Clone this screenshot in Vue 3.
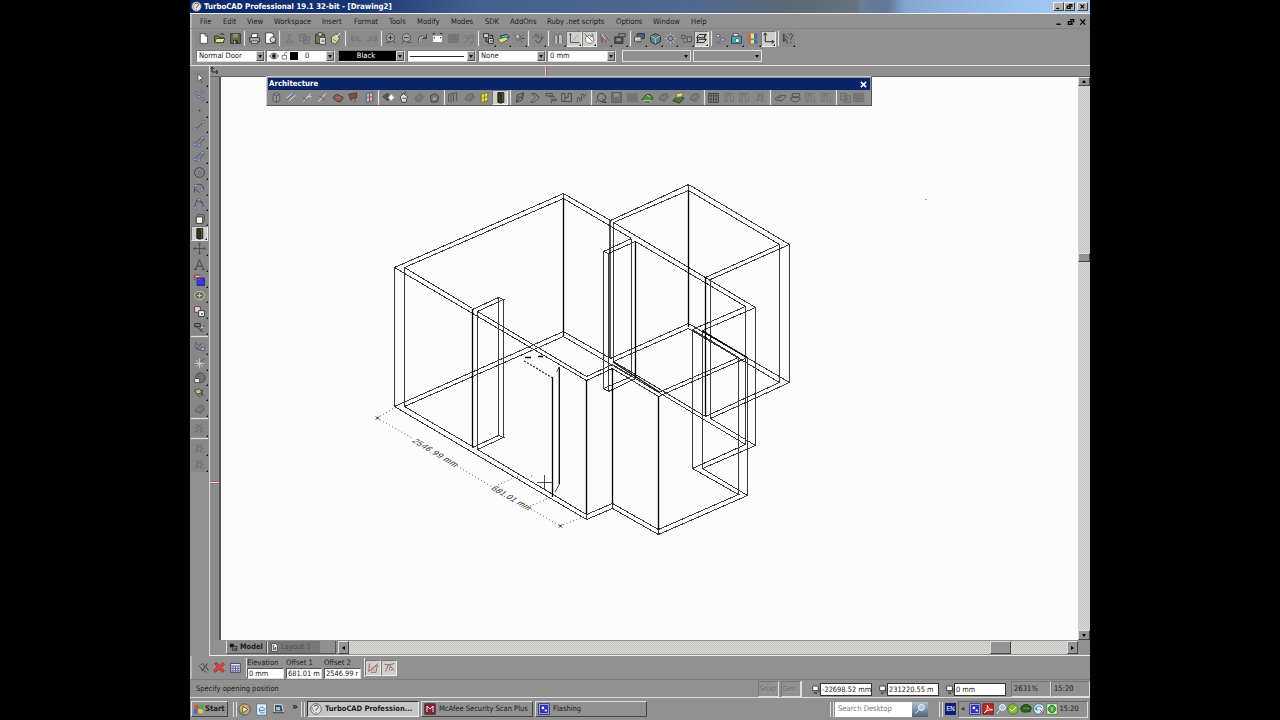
<script setup>
import { h } from 'vue'

const menus = [
  ['File', 23], ['Edit', 24], ['View', 27], ['Workspace', 48], ['Insert', 32],
  ['Format', 35], ['Tools', 28], ['Modify', 34], ['Modes', 34], ['SDK', 25],
  ['AddOns', 37], ['Ruby .net scripts', 69], ['Options', 37], ['Window', 38], ['Help', 30]
]

// each layer: [path, fill, stroke]
const icons = {
  new: [['M4 2h6l3 3v9h-9z', '#fff', '#555'], ['M10 2v3h3', 'none', '#555']],
  open: [['M2 5h5l1 2h5v6h-11z', '#8a8a30', '#333'], ['M4 8h11l-3 5h-10z', '#e6e38a', '#444'], ['M9 3l3-1 2 2', 'none', '#222']],
  save: [['M2 2h12v12h-12z', '#676b45', '#333'], ['M5 2h6v5h-6z', '#8c8f78', ''], ['M5 10h6v4h-6z', '#333', ''], ['M6 11h2v3h-2z', '#bbb', '']],
  print: [['M5 2h7l-1 5h-7z', '#fff', '#444'], ['M2 7h12v5h-12z', '#b5b5ac', '#333'], ['M4 11h8v3h-8z', '#ddd', '#444']],
  preview: [['M2 1h8l2 3v10h-10z', '#fff', '#444'], ['M11 6a3.5 3.5 0 1 1-.1 0M13 12l2 3', '#c8d8d8', '#333']],
  cut: [['M6 2l4 9M10 2l-4 9M5 11a1.5 1.5 0 1 1-.1 0M11 11a1.5 1.5 0 1 1-.1 0', 'none', '#737373']],
  copy: [['M2 3h7v8h-7zM7 6h7v8h-7z', '#8a8a8a', '#6b6b6b'], ['M4 6h3M9 9h3M9 11h3', 'none', '#666']],
  paste: [['M2 3h11v11h-11z', '#777755', '#333'], ['M5 1h5v4h-5z', '#ddd', '#333'], ['M7 7h7v8h-7z', '#fff', '#444'], ['M9 10h4M9 12h4', 'none', '#555']],
  brush: [['M3 6l6-4 4 6-5 7-5-2z', '#d5d29a', '#555'], ['M9 6l5-5', 'none', '#fff'], ['M5 9l4 3', 'none', '#777']],
  undo: [['M2 4v6h5M3 9c2-5 4-5 6 0M10 6v5h4', 'none', '#747474']],
  redo: [['M14 4v6h-5M13 9c-2-5-4-5-6 0M6 6v5h-4', 'none', '#747474']],
  zoomin: [['M8 2a5 5 0 1 1-.1 0M11 11l3 3', '#a8a8a8', '#505050'], ['M5 7h6M8 4v6', 'none', '#333'], ['M2 13h5', 'none', '#555']],
  zoomout: [['M8 2a5 5 0 1 1-.1 0M5 11l-3 3', '#a8a8a8', '#505050'], ['M5 7h6', 'none', '#333'], ['M9 13h5', 'none', '#555']],
  zoomprev: [['M3 13c-1-8 4-10 9-6M13 3v5h-5', 'none', '#444'], ['M4 12c0-5 2-6 5-6', 'none', '#ccc']],
  full: [['M2 4h12v9h-12z', '#fff', '#888'], ['M2 2h3M11 2h3M4 6v2M12 6v2', 'none', '#222']],
  block: [['M2 3h12v10h-12z', '#7c7c7c', '#747474'], ['M2 6h12M2 9h12M6 3v10M10 3v10', 'none', '#707070']],
  pan: [['M2 5h4v3h4v-4h4v9h-4M3 13l7-6', 'none', '#727272']],
  tree: [['M2 2h6v5h-6zM8 8h6v6h-6z', '#ccc', '#333'], ['M5 7v5h3M9 4h4v3M10 11h3', 'none', '#222']],
  layers: [['M4 5l8-2 3 3-8 3z', '#3fc6b4', '#236'], ['M1 9l10-3 3 3-9 5z', '#e2d977', '#564']],
  pick: [['M2 3l4 8 7-8M8 3l3 11', 'none', '#666'], ['M4 4h3v3h-3z', '#ccc', ''], ['M11 8h3', 'none', '#335']],
  spell: [['M2 7l3-5 2 5M3 5h3M8 2v5h4v-5', 'none', '#666'], ['M4 10l4 4 6-8', 'none', '#446']],
  bars: [['M3 14v-9l2-2 2 2v9M8 14v-11l3-1 2 4v8', '#bdbdbd', '#666']],
  axis: [['M3 2v11h11', 'none', '#6c4444'], ['M5 11l8-8', 'none', '#a9a59b'], ['M2 2h2v2h-2z', '#444', '']],
  orbit: [['M8 4a5 5 0 1 1-.1 0', '#fff', '#777'], ['M2 2l9 9M11 2l2 3-4 1', 'none', '#8a6666']],
  redcut: [['M3 2l2 11 2-9 3 10M10 6l4 5', 'none', '#8a525a'], ['M5 3l4 6', 'none', '#ddd']],
  camera: [['M1 6h10v8h-10z', '#555', '#333'], ['M6 2h8v4h-8z', '#888', '#444'], ['M3 8h5v3h-5z', '#999', '']],
  win: [['M5 2h9v6h-9z', '#57599b', '#333'], ['M2 6h8v6h-8z', '#d9d9d0', '#444'], ['M1 14l4-4h9', 'none', '#997']],
  cube: [['M2 5l6-3 6 3v7l-6 3-6-3z', '#5c858a', '#333'], ['M2 5l6 3 6-3M8 8v6', 'none', '#9bc0c6']],
  star: [['M8 1v14M1 8h14M3 3l10 10M13 3l-10 10', 'none', '#bcbcd0'], ['M8 5a3 3 0 1 1-.1 0', '#8d94ba', '#445']],
  chip: [['M2 4h4v4h-4zM9 6h5v6h-5z', '#999', '#555'], ['M6 6h3M4 8v5h5', 'none', '#667']],
  wire: [['M5 3h9l-3 4h-9zM5 9h9l-3 4h-9zM3 7v6M12 3v6', 'none', '#222']],
  nodes: [['M3 3h4v3h-4zM9 8h4v3h-4zM4 12h3v2h-3z', '#dfe0f4', '#667'], ['M6 5l6 4M10 9l-5 4', 'none', '#7a6ca0']],
  photo: [['M2 5h12v9h-12z', '#4ba9b3', '#345'], ['M4 2h6v3h-6z', '#fff', '#555'], ['M9 8a2.5 2.5 0 1 1-.1 0', '#fff', '#355']],
  palette: [['M2 2h4v12h-4z', '#d95e4f', ''], ['M6 2h4v12h-4z', '#eee267', ''], ['M10 2h4v12h-4z', '#4a65b2', ''], ['M2 8h12v2h-12z', '#3ba86c', '']],
  ucs: [['M4 2v10h10M2 4l2-3 2 3M12 10l3 2-3 2', 'none', '#222']],
  help: [['M3 2v10l3-3 2 5M3 2l6 6', '#555', '#444'], ['M10 4c0-3 5-2 4 1l-2 3v2M12 12v2', 'none', '#444']],
  cursor: [['M6 2v10l3-3 2 5M6 2l6 6-3 1', '#fff', '#555']],
  snapset: [['M2 3h3v3h-3zM10 2h3v3h-3zM6 8h3v3h-3zM11 11h3v3h-3z', '#a8acc8', '#626789']],
  point: [['M7 7h2v2h-2z', '#333', '']],
  line: [['M3 13l10-9', 'none', '#4c4c5a'], ['M1 11h3v3h-3zM11 2h3v3h-3z', '#b3bce1', '#656c96']],
  dbl: [['M2 11l9-9M5 14l9-9', 'none', '#50505c'], ['M1 10h3v3h-3zM10 2h3v3h-3zM6 11h3v3h-3z', '#b3bce1', '#656c96']],
  circle: [['M8 2a6 6 0 1 1-.1 0', 'none', '#444'], ['M7 7h3v3h-3z', '#b3bce1', '#535b87']],
  arc: [['M2 13c-2-14 12-12 11-4M8 13l-5-4', 'none', '#464650'], ['M9 8h3v3h-3zM2 3h3v3h-3z', '#b3bce1', '#656c96']],
  spline: [['M2 13c3-14 7-14 11 0M4 4l8 3', 'none', '#484855'], ['M1 12h3v3h-3zM12 12h3v3h-3zM6 2h3v3h-3z', '#b3bce1', '#656c96']],
  box: [['M4 6h8v8h-8z', '#fff', '#333'], ['M4 6l2-3h8v7l-2 4', 'none', '#555']],
  door: [['M5 2h7v12h-7z', '#5e6032', '#222'], ['M5 2l4 2v11l-4-1z', '#36391b', '#222']],
  move: [['M8 1v14M1 8h14M6 3l2-2 2 2M6 13l2 2 2-2M3 6l-2 2 2 2M13 6l2 2-2 2', 'none', '#505050']],
  text: [['M3 14l5-12 5 12M5 10h6M1 14h4M11 14h4', 'none', '#444']],
  blue: [['M5 5h9v9h-9z', '#3a3ade', '#2424a0'], ['M2 1h6v6h-6z', 'none', '#a44'], ['M4 3h4', 'none', '#ddd']],
  ring: [['M8 3c8 0 8 10 0 10s-8-10 0-10', '#6c6c68', '#d2d272'], ['M5 8h6M8 5v6', 'none', '#cbd']],
  dice: [['M2 2h7v7h-7z', '#e5d6d0', '#644'], ['M7 7h7v7h-7z', '#fff', '#333'], ['M10 10h2v2h-2z', '#333', '']],
  tools: [['M2 3h7v4h-7z', '#777', '#333'], ['M4 7l8 6M14 5l-5 8', 'none', '#444'], ['M10 7h3v2h-3z', '#bbd', '']],
  wand: [['M3 6l4-3 3 4-4 4zM6 11l6 3', '#8b8b82', '#555'], ['M13 3l-7 9M11 7l3 5', 'none', '#3a3a3a'], ['M4 5l3 3', 'none', '#c89a9a']],
  axes: [['M4 2v9l10 2M4 10l7-6', 'none', '#4e4e5e'], ['M10 9h4v4h-4zM3 6h3v3h-3z', '#b0b8d9', '#56608e']],
  burst: [['M8 2v12M2 8h12M4 4l8 8M12 4l-8 8', 'none', '#c6c6d2'], ['M9 6l5-4', 'none', '#444']],
  sphere: [['M9 1a6 6 0 1 1-.1 0', '#737373', '#4c4c4c'], ['M2 8h6v5h-6z', '#eee', '#555']],
  gold: [['M2 4l6-2 3 5-6 2z', '#c7c36e', '#444'], ['M5 9l4 4M9 7l5 4M12 3l-2 8', 'none', '#3d4b3c']],
  rock: [['M2 10l4-6 6-1 2 5-5 5z', '#757575', '#686868'], ['M5 9l5-3', 'none', '#888']],
  scrap: [['M3 3l4 2 5-3M3 8l5-2 5 3M2 12l6-2 5 3M6 3l-2 10M11 4l-2 10', 'none', '#707070']],
  wall: [['M4 4l4-2 4 2v8l-4 2-4-2zM8 6v8M4 4l4 2 4-2', '#9999a6', '#555565']],
  rails: [['M2 9l7-6M5 12l8-7M7 14l6-6', 'none', '#dedeef'], ['M2 11l9-8M6 14l7-6', 'none', '#686884']],
  slash: [['M3 13l9-10M8 7h5', 'none', '#ddd'], ['M2 8l5 3', 'none', '#555']],
  slashred: [['M3 13l9-10', 'none', '#ddd'], ['M4 6l7 5', 'none', '#8d4b4b']],
  redroof: [['M1 8l5-4 8 4-3 5h-5z', '#84645f', '#553a37'], ['M5 8h5', 'none', '#b07070']],
  redflag: [['M2 4l10-2v6l-8 2z', '#84504f', '#503c3c'], ['M10 9v5M5 10v3', 'none', '#555']],
  colwin: [['M4 3l8-1v10l-8 2z', '#bbb6d4', '#5b5f8f'], ['M8 3v10M4 8l8-1', 'none', '#a4484c']],
  slab: [['M1 7l5-4 5 3-4 6z', '#57594f', '#444'], ['M11 4l4 4-4 4-3-4z', '#fff', '#bbb']],
  ball: [['M4 7l4-4 5 4-2 7h-5z', '#dcdcd2', '#444'], ['M7 9h4M6 4l5-2', 'none', '#444']],
  gray: [['M3 8l5-5 5 4-4 6-5-1z', '#7b7b7b', '#696969']],
  geo: [['M3 6l5-3 5 3-1 7-8 1z', '#7d776b', '#4a4643'], ['M6 8h4v3h-4z', '#b2a6a2', '']],
  fence: [['M2 4l10-2v10M2 4v10M5 5v9M8 4v9', '#878787', '#555']],
  yellow: [['M4 4l8-2v10l-8 2z', '#eaea44', '#74742b'], ['M8 3v10M4 9l8-2', 'none', '#84842a']],
  chain: [['M4 5l8-3-2 9-7 3zM3 13l9-10M5 7l6 2', 'none', '#454545']],
  chevs: [['M3 3h5l5 5-7 6h-4l6-6zM6 3l6 5', 'none', '#555']],
  flow: [['M1 3h8v3h-8zM5 7h7M7 10h7v2h-6v3', 'none', '#505050']],
  plan: [['M2 3v10h12v-10h-4v5h-4v-5zM6 8v5', 'none', '#4a4a4a']],
  steps: [['M3 14v-6h3v5M8 12v-8h3v5M11 5h3', 'none', '#555']],
  lens: [['M8 3a5 5 0 1 1-.1 0M3 12l-2 2M9 10l5 4h-5', 'none', '#3d3d3d']],
  disk: [['M2 2h12v12h-12z', '#737373', '#606060'], ['M5 3h6v4h-6z', '#929292', '']],
  hill: [['M1 11l5-6 5-1 4 5-6 5z', '#4c9048', '#353f2e'], ['M2 12h11', 'none', '#dbd899'], ['M7 5l4 2', 'none', '#b7e28b']],
  hilly: [['M1 12l5-5h5l4 2-6 6z', '#55703f', '#353f2e'], ['M6 3l8-1-2 5-7 1z', '#dfdb84', '#675']],
  grid: [['M2 3h12v11h-12zM2 6h12M2 10h12M5 3v11M8 3v11M11 3v11', '#8c8c8c', '#444']],
  stat: [['M2 3v10h3v-8h4v8h4v-6M2 3h11', 'none', '#737373']],
  flat: [['M2 9l6-4 7 1-5 6-8-1zM5 9l5-3', 'none', '#525252']],
  flats: [['M4 3h9v4h-9zM2 8h10l2 2-5 4-6-2z', 'none', '#525252']],
  redx: [['M2 3l3-1 3 4 4-4 2 2-4 4 4 4-2 2-5-4-4 4-2-2 4-5z', '#de4649', '#aa2e31']],
  table: [['M2 3h12v11h-12z', '#f0f0fb', '#424277'], ['M2 6h12M2 9h12M2 12h12M5 6v8M8 6v8M11 6v8', 'none', '#62639a']],
  compass: [['M3 3l-1 10 10-8M5 12l8-9M13 5l-2 9h-6', 'none', '#a7656a'], ['M4 6l7 7', 'none', '#aaa']],
  compass2: [['M3 13l4-9 7 8M2 4l5 1 7-2', 'none', '#a7656a'], ['M8 8h3v3h-3z', '#fff', '#977']],
  logo: [['M8 1a7 7 0 1 1-.1 0', '#e7e7df', '#555'], ['M5 5c2-3 7-2 6 1l-3 3v1M8 12v1', 'none', '#333'], ['M2 4l3 8', 'none', '#888']],
  eye: [['M1 8c4-6 10-6 14 0-4 6-10 6-14 0', '#fff', '#111'], ['M8 5a3 3 0 1 1-.1 0', '#223', '#111']],
  lock: [['M5 7h7v6h-7zM9 7v-3c0-3 4-3 4 0', 'none', '#555']],
  models: [['M2 2h6v5h-6z', '#111', '#111'], ['M6 6h8v7h-8z', '#888', '#111'], ['M8 9l3 2 3-2', 'none', '#111']],
  sheet: [['M3 1h7l3 3v11h-10z', '#fff', '#222'], ['M8 4h-2v8h4v-5M7 9h3', 'none', '#111']],
  coord: [['M3 1h10v8h-10z', '#fff', '#111'], ['M5 11l6 4M11 11l-6 4M14 5v8', 'none', '#222']],
  media: [['M8 1a7 7 0 1 1-.1 0', '#dca65a', '#335b91'], ['M6 4l6 4-6 4z', '#fff', '#363'], ['M2 8a6 6 0 0 0 6 6', 'none', '#2a8a4a']],
  ie: [['M2 1h12v14h-12z', '#e9eff4', '#4f7ca0'], ['M12 11c-6 5-9-5-4-6 4 0 4 3 3 4h-6', 'none', '#2877a8']],
  desk: [['M3 2h9l2 9h-11z', '#33495f', '#ddd'], ['M5 5h5v4h-5z', '#9fc4d9', ''], ['M1 12h14', 'none', '#333']],
  mcafee: [['M1 1h14v14h-14z', '#8b2233', '#333'], ['M4 12v-8l4 4 4-4v8', 'none', '#fff']],
  flash: [['M1 1h14v14h-14z', '#fff', '#11118c'], ['M3 3h10v10h-10z', '#3a3abc', '#11118c'], ['M5 5h3v3h-3zM9 9h3v2h-3z', '#fff', '']],
  pdf: [['M1 1h14v14h-14z', '#b62a23', '#7b1d18'], ['M3 13c3-2 5-6 4-10 2 5 4 6 7 6-5 0-8 1-11 4', 'none', '#fff']],
  search: [['M10 2a4 4 0 1 1-.1 0', '#a9c8e0', '#fff'], ['M7 9l-5 5', 'none', '#e5eef6']],
  check: [['M8 1a7 7 0 1 1-.1 0', '#88b23a', '#4a7420'], ['M4 8l3 3 5-6', 'none', '#fff']],
  dino: [['M1 8c0-8 14-8 14 0l-2 4h-10z', '#2c6325', '#183c16'], ['M4 12v2M11 12v2M5 7h7', 'none', '#72a85d']],
  sync: [['M8 1a7 7 0 1 1-.1 0', '#dcebf5', '#27779b'], ['M4 9c0-6 6-6 8-2M4 6v3h3', 'none', '#27779b'], ['M9 9l5 5M14 9l-5 5', 'none', '#c23535']],
  webroot: [['M1 1h14v14h-14z', '#e7f1dc', '#4d7a3d'], ['M8 3a5 5 0 1 1-.1 0', '#4ca83d', '#26762a'], ['M8 6v4', 'none', '#fff']],
  flag: [['M2 3l5-1v6l-5 1z', '#d94e32', ''], ['M8 2l6 1v5l-6-1z', '#54a643', ''], ['M1 9l5-1v6l-5 1z', '#416bd0', ''], ['M7 8l6 1v5l-6-1z', '#ecc73f', '']]
}

const Icon = (props) =>
  h('svg', { viewBox: '0 0 16 16', class: 'icon' },
    (icons[props.name] || []).map(([d, fill, stroke]) =>
      h('path', { d, fill, stroke: stroke || 'none', 'stroke-width': 1.2 })))
Icon.props = ['name']

// [icon, cell width, pressed]; '|' is a separator
const mainBar = [
  ['new', 16], ['open', 16], ['save', 16], ['|', 3], ['print', 16], ['preview', 16], ['|', 3],
  ['cut', 16], ['copy', 15], ['paste', 16], ['brush', 15], ['|', 5], ['undo', 16], ['redo', 15], ['|', 4],
  ['zoomin', 15], ['zoomout', 16], ['zoomprev', 16], ['full', 15], ['block', 16], ['pan', 15], ['|', 4],
  ['tree', 16], ['layers', 15], ['pick', 16], ['|', 3], ['spell', 16], ['|', 4],
  ['bars', 16], ['axis', 16, 1], ['orbit', 15, 1], ['redcut', 15], ['camera', 16], ['|', 4],
  ['win', 15], ['cube', 16], ['star', 15], ['chip', 16], ['wire', 15, 1], ['|', 4],
  ['nodes', 15], ['photo', 16], ['palette', 17], ['ucs', 15, 1], ['|', 4], ['help', 15]
]

const archBar = [
  ['wall', 16], ['rails', 15], ['slash', 16], ['slashred', 15], ['redroof', 16], ['redflag', 15], ['colwin', 16], ['|', 3],
  ['slab', 16], ['ball', 15], ['gray', 16], ['geo', 15], ['|', 4],
  ['fence', 15], ['rock', 16], ['yellow', 15], ['door', 16, 1], ['|', 4],
  ['chain', 16], ['chevs', 15], ['flow', 16], ['plan', 15], ['steps', 15], ['|', 4],
  ['lens', 16], ['disk', 15], ['block', 16], ['hill', 15], ['rock', 16], ['hilly', 15], ['rock', 16], ['|', 4],
  ['grid', 15], ['stat', 16], ['stat', 15], ['scrap', 16], ['|', 4],
  ['flat', 16], ['flats', 15], ['stat', 15], ['stat', 16], ['|', 4], ['copy', 14], ['block', 13]
]

const sideBar = [
  ['cursor', 17], ['snapset', 16], ['point', 15], ['line', 15], ['dbl', 16], ['dbl', 15], ['circle', 16],
  ['arc', 16], ['spline', 15], ['box', 15], ['door', 15, 1], ['move', 15], ['text', 16], ['blue', 16],
  ['ring', 15], ['dice', 16], ['tools', 16], ['|', 3], ['axes', 17], ['burst', 16], ['sphere', 15],
  ['gold', 15], ['rock', 16], ['|', 3], ['scrap', 17], ['|', 3], ['scrap', 16], ['scrap', 16]
]

const thinLines = [
  // main room, ceiling
  'M394.5 267.5L563.5 193.5L610.5 220.5', 'M404.5 267.5L563.5 198.5L631.5 238.5',
  'M394.5 267.5L586.5 380.5L612.5 368.5L658.5 396.5L747.5 357.5L702.5 330.5L755.5 307.5L613.5 222.5',
  'M404.5 267.5L472.5 308.5M477.5 311.5L586.5 376.5L612.5 364.5L658.5 392.5L738.5 357.5L692.5 329.5L745.5 306.5L635.5 241.5',
  'M472.5 309.5L498.5 297.5L503.5 299.5L477.5 311.5',
  'M603.5 251.5L631.5 238.5M603.5 251.5L608.5 253.5L635.5 241.5',
  // back room, ceiling
  'M610.5 220.5L688.5 184.5L789.5 244.5L710.5 279.5', 'M613.5 222.5L688.5 190.5L779.5 244.5L705.5 277.5',
  // floor
  'M394.5 406.5L563.5 331.5L610.5 358.5L688.5 323.5L789.5 382.5L710.5 418.5L755.5 445.5L702.5 468.5L747.5 495.5L658.5 534.5L612.5 508.5L586.5 519.5Z',
  'M472.5 446.5L404.5 406.5L563.5 336.5L631.5 376.5L603.5 388.5L608.5 391.5L635.5 378.5L745.5 444.5L692.5 468.5L738.5 494.5L658.5 529.5L612.5 503.5L586.5 514.5L477.5 449.5L503.5 437.5L498.5 435.5L472.5 447.5',
  'M613.5 361.5L688.5 328.5L779.5 382.5L705.5 416.5Z',
  // corners
  'M394.5 267V406M404.5 268V406M477.5 311V449M498.5 297V435M503.5 299V437M603.5 251V388M608.5 253V391',
  'M613.5 222V361M631.5 239V376M692.5 330V468M702.5 332V468M738.5 357V494M747.5 358V495M745.5 306V444',
  'M755.5 307V445M710.5 279V418M779.5 244V382M789.5 244V382M563.5 193V198M688.5 184V190M658.5 529V534M612.5 503V508M586.5 514V519'
]

const boldLines = [
  'M563.5 198V336M472.5 309V447M610 220V358M635.5 241V378M688.5 190V327M705.5 277V416',
  'M586.5 380V514M612.5 368V503M658.5 396V529M552.5 377V497', 'M559.3 367V484'
]

const fields = [['Elevation', '0 mm', 37], ['Offset 1', '681.01 m', 36], ['Offset 2', '2546.99 r', 37]]
const coords = [['-22698.52 mm', 67], ['231220.55 m', 67], ['0 mm', 62]]
const tray = ['flash', 'pdf', 'search', 'check', 'dino', 'sync', 'webroot']
</script>

<template>
  <div class="screen">
    <div class="app">
      <header class="titlebar">
        <Icon name="logo" />
        <b>TurboCAD Professional 19.1 32-bit - [Drawing2]</b>
        <div class="win-buttons">
          <i><svg viewBox="0 0 10 9"><path d="M2 7h4" /></svg></i>
          <i><svg viewBox="0 0 10 9"><path d="M4 2h4v3M2 4h4v3h-4z" /></svg></i>
          <i class="close"><svg viewBox="0 0 10 9"><path d="M2.500 2l4.500 5M7 2l-4.500 5" /></svg></i>
        </div>
      </header>

      <nav class="menubar">
        <span v-for="[label, w] in menus" :key="label" :style="{ width: w + 'px' }">{{ label }}</span>
        <div class="win-buttons flat">
          <i><svg viewBox="0 0 10 9"><path d="M2 7h5" /></svg></i>
          <i><svg viewBox="0 0 10 9"><path d="M4 2h4v3M2 4h4v3h-4z" /></svg></i>
          <i class="close"><svg viewBox="0 0 10 9"><path d="M2 1.500l5.500 6M7.500 1.500l-5.500 6" /></svg></i>
        </div>
      </nav>

      <div class="toolbar main-bar">
        <span
          v-for="([name, w, on], i) in mainBar"
          :key="i"
          :class="[name === '|' ? 'sep' : 'tool', { on, menu: name !== '|' && (i > 27 || (i > 21 && i < 27)) }]"
          :style="{ width: w + 'px' }"
        ><Icon v-if="name !== '|'" :name="name" /></span>
      </div>

      <div class="props">
        <div class="combo style"><span>Normal Door</span><em></em></div>
        <div class="combo layer"><Icon name="eye" /><Icon name="lock" /><u></u><span>0</span><em></em></div>
        <div class="combo color"><span>Black</span><em></em></div>
        <div class="combo pattern"><hr /><em></em></div>
        <div class="combo brush"><span>None</span><em></em></div>
        <div class="combo width"><span>0 mm</span><em></em></div>
        <div class="combo off first"><em></em></div>
        <div class="combo off"><em></em></div>
      </div>

      <div class="work">
        <aside class="side">
          <span
            v-for="([name, s, on], i) in sideBar"
            :key="i"
            :class="[name === '|' ? 'hsep' : 'tool', { on, menu: name !== '|' }]"
            :style="{ height: s + 'px' }"
          ><Icon v-if="name !== '|'" :name="name" /></span>
        </aside>

        <div class="document">
          <div class="ruler-top">
            <svg viewBox="0 0 10 9" class="origin"><path d="M2 1v5h6M1 3l1-2 2 2M6 4l2 2-2 2" /></svg>
            <i></i>
          </div>
          <div class="doc-row">
            <div class="ruler-left"><i></i></div>
            <div class="canvas">
              <svg viewBox="221 77 857 563" width="857" height="563">
                <g class="thin"><path v-for="d in thinLines" :key="d" :d="d" /></g>
                <g class="bold"><path v-for="d in boldLines" :key="d" :d="d" /></g>
                <path class="heavy" d="M613 362L660 392.500M702 331L747 357.500" />
                <path class="mark" d="M525 357.500h6M538 356.500h5" />
                <path class="dash" d="M524 361L552 377.500" />
                <path class="cross" d="M559.500 367l-3 5M559.500 484L555 492M537 482.500h15M544.500 475v14M517 477h1M531 476h1" />
                <g class="dots">
                  <path d="M377 418L412 438M457 466L492 487M531 509L560 526" />
                  <path d="M377 418L394 408M560 526L586 516M498 485L518 476M530 506L552 497" />
                </g>
                <path class="cross" d="M375.500 416.500l4 3M379.500 416.500l-4 3M558.500 524.500l4 3M562.500 524.500l-4 3M925.500 199.500h1" />
                <text class="dim" transform="translate(411.500 441.500) rotate(31) skewX(-28)" textLength="50">2546.99 mm</text>
                <text class="dim" transform="translate(490.500 489) rotate(30) skewX(-28)" textLength="43">681.01 mm</text>
              </svg>
            </div>
            <div class="vscroll"><i class="up"></i><i class="thumb"></i><i class="down"></i></div>
          </div>
          <div class="tabs">
            <div class="tab"><Icon name="models" /><b>Model</b></div>
            <div class="tab layout"><Icon name="sheet" /><span>Layout 1</span></div>
            <div class="hscroll"><i class="left"></i><i class="thumb"></i><i class="right"></i></div>
          </div>
        </div>
      </div>

      <div class="inspector">
        <Icon name="wand" /><Icon name="redx" /><Icon name="table" />
        <span class="sep"></span>
        <label v-for="[label, value, w] in fields" :key="label" :style="{ width: w + 'px' }">
          {{ label }}<span>{{ value }}</span>
        </label>
        <span class="sep"></span>
        <span class="tool on"><Icon name="compass" /></span>
        <span class="tool on"><Icon name="compass2" /></span>
      </div>

      <div class="status">
        <p>Specify opening position</p>
        <div class="cell ghost">Snap</div>
        <div class="cell ghost geo">Geo</div>
        <div class="coords">
          <div v-for="[value, w] in coords" :key="value" class="coord" :style="{ width: w + 'px' }">
            <Icon name="coord" /><span>{{ value }}</span>
          </div>
        </div>
        <div class="cell zoom">2631%</div>
        <div class="cell clock">15:20</div>
      </div>

      <footer class="taskbar">
        <div class="start"><Icon name="flag" /><b>Start</b></div>
        <span class="grip"></span>
        <div class="quick"><Icon name="media" /><Icon name="ie" /><Icon name="desk" /><b>»</b></div>
        <span class="grip second"></span>
        <div class="task active"><Icon name="logo" /><b>TurboCAD Profession...</b></div>
        <div class="task"><Icon name="mcafee" />McAfee Security Scan Plus</div>
        <div class="task"><Icon name="flash" />Flashing</div>
        <span class="grip push"></span>
        <div class="search">Search Desktop</div>
        <div class="go"><Icon name="search" /></div>
        <span class="grip tray-grip"></span>
        <div class="lang">EN</div>
        <div class="tray"><b>«</b><Icon v-for="name in tray" :key="name" :name="name" /><span>15:20</span></div>
      </footer>

      <section class="palette">
        <h2>Architecture<svg viewBox="0 0 8 8"><path d="M1 1l6 6M7 1l-6 6" /></svg></h2>
        <div class="toolbar">
          <span
            v-for="([name, w, on], i) in archBar"
            :key="i"
            :class="[name === '|' ? 'sep' : 'tool', { on }]"
            :style="{ width: w + 'px' }"
          ><Icon v-if="name !== '|'" :name="name" /></span>
        </div>
      </section>
    </div>
  </div>
</template>

<style>
body {
  margin: 0;
  background: #000;
}
</style>

<style scoped>
* {
  box-sizing: border-box;
}

.screen {
  display: flex;
  justify-content: center;
  width: 1280px;
  height: 720px;
  overflow: hidden;
  background: #000;
  font: 7.6px/10px "DejaVu Sans Condensed", "DejaVu Sans", sans-serif;
  color: #1c1c1c;
}

.app {
  position: relative;
  display: flex;
  flex-direction: column;
  width: 900px;
  height: 720px;
  background: #919191;
  white-space: nowrap;
}

i {
  display: block;
}

.icon {
  display: block;
  flex: none;
  width: 12px;
  height: 12px;
}

.titlebar {
  display: flex;
  align-items: center;
  height: 13px;
  padding: 0 2px 0 1px;
  background: linear-gradient(90deg, #0a246a 0, #163474 18%, #46618f 32%, #4e688f 55%, #5a6877 66%, #66737f 74.200%, #6c7d96 74.500%, #607796 77.500%, #86a6d2 79.500%, #9bc3f0 92%, #a6caf0);
  color: #fff;
}

.titlebar .icon {
  width: 11px;
  height: 11px;
}

.titlebar b {
  margin-left: 2px;
  font-size: 7.800px;
}

.win-buttons {
  display: flex;
  margin-left: auto;
}

.win-buttons i {
  width: 11px;
  height: 9px;
  background: #b0b0aa;
  border: 1px solid #444;
  border-top-color: #eee;
  border-left-color: #eee;
}

.win-buttons .close {
  margin-left: 2px;
}

.win-buttons svg {
  display: block;
  width: 9px;
  height: 7px;
  fill: none;
  stroke: #000;
  stroke-width: 1.500;
}

.win-buttons.flat i {
  width: 12px;
  background: none;
  border-color: transparent;
}

.win-buttons.flat .close {
  margin-left: 0;
}

.win-buttons.flat svg {
  width: 10px;
  height: 8px;
}

.menubar {
  display: flex;
  align-items: center;
  height: 16px;
  padding: 1px 1px 0 10px;
  border-top: 1px solid #eee;
  border-bottom: 1px solid #838383;
  box-shadow: inset 3px 0 0 -1px #b5b5b5;
}

.menubar span {
  flex: none;
}

.toolbar {
  display: flex;
  align-items: center;
}

.main-bar {
  height: 19px;
  padding-left: 5px;
  box-shadow: inset 3px 0 0 -1px #b5b5b5;
}

.sep {
  align-self: stretch;
  flex: none;
  margin: 2px 0;
  background: linear-gradient(#e4e4e4, #e4e4e4) center / 1px 100% no-repeat;
}

.tool {
  position: relative;
  display: flex;
  flex: none;
  align-items: center;
  justify-content: center;
  height: 16px;
}

.tool .icon {
  width: 13px;
  height: 13px;
}

.main-bar .tool,
.palette .tool {
  background: #8a8a8a;
}

.main-bar .tool.on,
.palette .tool.on,
.side .tool.on,
.tool.on {
  background: #cfcfcb;
  border: 1px solid #eee;
  border-top-color: #777;
  border-left-color: #777;
}

.tool.menu::after {
  content: "";
  position: absolute;
  right: 0;
  bottom: 0;
  border: 1.500px solid #111;
  border-top-color: transparent;
  border-left-color: transparent;
}

.props {
  display: flex;
  align-items: center;
  height: 18px;
  padding: 0 0 1px 6px;
  border-bottom: 1px solid #e5e5e5;
  box-shadow: inset 3px 0 0 -1px #b5b5b5;
}

.combo {
  display: flex;
  flex: none;
  align-items: center;
  height: 12px;
  padding-left: 2px;
  background: #fff;
  border: 1px solid #777;
  border-right-color: #ddd;
  border-bottom-color: #ddd;
  font-size: 7.500px;
}

.combo em {
  display: flex;
  flex: none;
  align-items: center;
  justify-content: center;
  width: 8px;
  height: 10px;
  margin-left: auto;
  background: #999;
  border: 1px solid #555;
  border-top-color: #ddd;
  border-left-color: #ddd;
}

.combo em::after {
  content: "";
  border: 2px solid transparent;
  border-top: 3px solid #111;
  border-bottom: 0;
}

.combo.style { width: 69px; }
.combo.layer { width: 69px; margin-left: 1px; }
.combo.color { width: 67px; margin-left: 3px; background: #000; color: #fff; }
.combo.pattern { width: 69px; margin-left: 2px; }
.combo.brush { width: 68px; margin-left: 2px; }
.combo.width { width: 69px; margin-left: 1px; }
.combo.off { width: 69px; margin-left: 2px; background: none; border: 1px solid #e0e0e0; }
.combo.off.first { margin-left: 6px; }
.combo.off em { background: none; border-color: transparent; }

.layer .icon {
  width: 10px;
  height: 10px;
}

.layer u {
  width: 8px;
  height: 8px;
  margin: 0 7px 0 1px;
  background: #000;
}

.color span {
  flex: 1;
  padding-right: 5px;
  text-align: center;
}

.pattern hr {
  width: 54px;
  margin: 0;
  border: 0;
  border-top: 1px solid #222;
}

.work {
  display: flex;
  height: 590px;
}

.side {
  display: flex;
  flex: none;
  flex-direction: column;
  align-items: center;
  width: 19px;
  padding-top: 4px;
}

.side .tool {
  width: 17px;
  background: #878787;
}

.side .tool,
.hsep {
  margin-right: 1px;
}

.hsep {
  width: 17px;
  background: linear-gradient(#e0e0d8, #e0e0d8) center / 100% 1px no-repeat;
}

.document {
  display: flex;
  flex: 1;
  flex-direction: column;
  border-left: 1px solid #ddd;
}

.ruler-top {
  display: flex;
  height: 11px;
  background: #909090;
  border-bottom: 1px solid #5f5f5f;
}

.ruler-top i {
  width: 2px;
  height: 10px;
  margin-left: 325px;
  background: #a65f80;
  border-left: 1px solid #ccc;
}

.origin {
  width: 10px;
  height: 9px;
  fill: none;
  stroke: #222;
}

.doc-row {
  display: flex;
  height: 563px;
}

.ruler-left {
  width: 11px;
  padding-top: 404px;
  background: #8d8d8d;
  border-right: 2px solid #555;
}

.ruler-left i {
  height: 3px;
  border: 1px solid #a65f80;
  border-width: 1px 0;
  background: #ddd;
}

.canvas {
  width: 857px;
  background: #fdfcfd;
}

.canvas svg {
  display: block;
}

.canvas path {
  fill: none;
  stroke: #222;
}

.thin path {
  stroke: #3c3c3c;
  shape-rendering: crispEdges;
}

.bold path {
  stroke: #000;
  stroke-width: 1.300;
}

.canvas .heavy {
  stroke: #000;
  stroke-width: 1.100;
}

.canvas .mark {
  stroke: #000;
  stroke-width: 1.500;
}

.canvas .dash {
  stroke-width: 1.200;
  stroke-dasharray: 2 1.500;
}

.canvas .cross {
  stroke-width: .8;
}

.dots path {
  stroke: #555;
  stroke-width: .9;
  stroke-dasharray: 1 2.500;
}

.dim {
  font: 8px "Liberation Sans", sans-serif;
  fill: #222;
}

.vscroll,
.hscroll {
  display: flex;
  background: repeating-conic-gradient(#c3c3bf 0 25%, #d9d9d5 0 50%) 0 0 / 2px 2px;
}

.vscroll {
  flex-direction: column;
  flex: 1;
}

.vscroll i,
.hscroll i {
  display: flex;
  align-items: center;
  justify-content: center;
  height: 10px;
  background: #949494;
  border: 1px solid #444;
  border-top-color: #ddd;
  border-left-color: #ddd;
}

.up::after,
.down::after,
.left::after,
.right::after {
  content: "";
  border: 2.500px solid transparent;
}

.up::after { border-bottom: 3px solid #000; border-top: 0; }
.down::after { border-top: 3px solid #000; border-bottom: 0; }
.left::after { border-right: 3px solid #000; border-left: 0; }
.right::after { border-left: 3px solid #000; border-right: 0; }

.vscroll .up { height: 9px; }
.vscroll .thumb { margin: 167px 0 368px; height: 9px; }

.tabs {
  display: flex;
  height: 16px;
  padding: 1px 12px 1px 16px;
  border-bottom: 1px solid #eee;
}

.tab {
  display: flex;
  flex: none;
  align-items: center;
  width: 41px;
  height: 13px;
  padding-left: 2px;
  background: #888;
  border: 1px solid #555;
  border-top: 0;
  border-left-color: #ddd;
}

.tab b {
  font-size: 7.400px;
}

.tab .icon {
  width: 9px;
  height: 9px;
  margin-right: 2px;
}

.tab.layout {
  width: 69px;
  margin-right: 2px;
  background: linear-gradient(90deg, #777 52px, #909090 0);
  color: #505050;
}

.hscroll {
  flex: 1;
  height: 13px;
}

.hscroll i { width: 11px; height: 13px; }
.hscroll .thumb { width: 21px; margin-left: auto; }
.hscroll .right { margin-left: 56px; }

.inspector {
  display: flex;
  align-items: center;
  height: 24px;
  padding-left: 7px;
  border-bottom: 1px solid #7d7d7d;
  box-shadow: inset 3px 0 0 -1px #b5b5b5;
}

.inspector > .icon {
  width: 13px;
  height: 13px;
  margin-right: 3px;
}

.inspector .sep {
  width: 2px;
}

.inspector label {
  height: 22px;
  margin-right: 2px;
  font-size: 7.500px;
  line-height: 11px;
}

.inspector label span {
  display: block;
  height: 11px;
  padding-left: 1px;
  background: #fff;
  border: 1px solid #555;
  border-right-color: #ddd;
  border-bottom-color: #ddd;
  font-size: 7.400px;
  line-height: 9px;
}

.inspector .tool {
  width: 16px;
}

.status {
  display: flex;
  align-items: center;
  height: 17px;
  padding-left: 6px;
}

.status p {
  flex: none;
  width: 562px;
  margin: 0;
  font-size: 7.500px;
}

.cell {
  height: 16px;
  padding: 2px 2px 0;
  border: 1px solid #777;
  border-right-color: #ddd;
  border-bottom-color: #ddd;
}

.ghost {
  width: 21px;
  padding-left: 1px;
  color: #6c6c6c;
  font-size: 7.200px;
  text-shadow: 1px 1px #a2a2a2;
}

.ghost.geo { margin-left: 2px; width: 20px; }
.zoom { width: 40px; }
.clock { width: 39px; }

.coords {
  display: flex;
  width: 210px;
  height: 16px;
  align-items: center;
  padding: 2px 0 0 9px;
  border-left: 1px solid #ddd;
}

.coord {
  display: flex;
  flex: none;
  align-items: center;
}

.coord .icon {
  width: 9px;
}

.coord span {
  flex: none;
  width: 52px;
  height: 13px;
  padding-left: 1px;
  background: #fff;
  border: 1px solid #333;
  font-size: 7.400px;
  line-height: 11px;
}

.taskbar {
  display: flex;
  align-items: center;
  height: 23px;
  padding: 2px 2px 2px 1px;
  border-top: 1px solid #ddd;
}

.start,
.task {
  display: flex;
  align-items: center;
  height: 16px;
  border: 1px solid #444;
  border-top-color: #e0e0e0;
  border-left-color: #e0e0e0;
}

.start {
  flex: none;
  width: 37px;
  padding-left: 1px;
}

.start b {
  font-size: 7.700px;
}

.grip {
  flex: none;
  width: 4px;
  height: 15px;
  margin-left: 5px;
  border: 1px solid #ddd;
  border-width: 0 1px;
}

.quick {
  display: flex;
  flex: none;
  align-items: center;
  gap: 4px;
  width: 61px;
  padding-left: 1px;
}

.quick .icon {
  width: 13px;
  height: 13px;
}

.quick b {
  margin: -5px 0 0 3px;
  font-size: 10px;
}

.grip.second {
  margin-left: 3px;
}

.task {
  flex: none;
  gap: 3px;
  width: 112px;
  margin-left: 2px;
  padding-left: 2px;
  font-size: 7.500px;
}

.task + .task {
  margin-left: 2px;
}

.task.active {
  background: #c6c6c4;
  border-color: #333 #eee #eee #333;
}

.grip.push {
  margin-left: 183px;
}

.search {
  flex: none;
  width: 77px;
  height: 15px;
  margin-left: 1px;
  padding: 2px 3px;
  background: #fff;
  color: #777;
  font-size: 7.600px;
}

.go {
  display: flex;
  flex: none;
  justify-content: center;
  align-items: center;
  width: 16px;
  height: 15px;
  background: linear-gradient(#aebfce, #50637a);
}

.tray-grip {
  margin-left: 11px;
}

.lang {
  flex: none;
  width: 11px;
  height: 12px;
  margin-left: 2px;
  background: #0c1e78;
  color: #fff;
  font-size: 7px;
  line-height: 12px;
  text-align: center;
}

.tray {
  display: flex;
  align-items: center;
  height: 17px;
  margin-left: 2px;
  padding-left: 2px;
  border: 1px solid #666;
  border-right-color: #ddd;
  border-bottom-color: #ddd;
  flex: 1;
}

.tray b {
  width: 8px;
}

.tray .icon {
  margin-right: .8px;
}

.tray span {
  margin-left: 1px;
  font-size: 7.400px;
}

.palette {
  position: absolute;
  top: 76px;
  left: 76px;
  width: 606px;
  height: 30px;
  padding: 1px;
  background: #919191;
  border: 1px solid #ccc;
  border-right-color: #555;
  border-bottom-color: #555;
}

.palette h2 {
  display: flex;
  align-items: center;
  justify-content: space-between;
  height: 12px;
  margin: 0;
  padding: 0 3px 0 1px;
  background: #0a246a;
  color: #fff;
  font-size: 7.800px;
}

.palette h2 svg {
  width: 7px;
  height: 7px;
  fill: none;
  stroke: #fff;
  stroke-width: 1.800;
}

.palette .toolbar {
  height: 15px;
}

.palette .sep {
  margin: 0;
}

.palette .tool {
  height: 15px;
}
</style>
